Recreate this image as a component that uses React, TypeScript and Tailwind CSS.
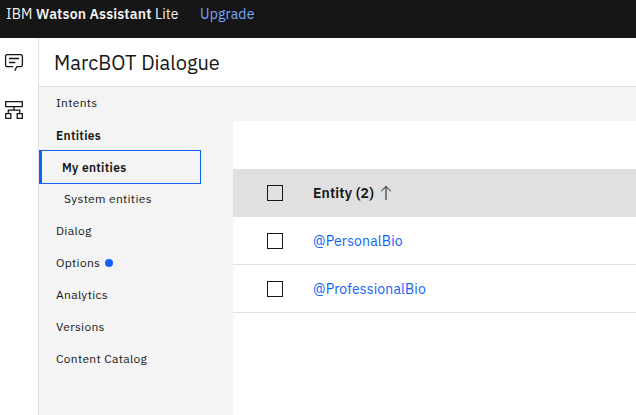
import React from "react";

function Checkbox() {
  return <span className="block h-4 w-4 shrink-0 border border-[#161616]" />;
}

function NavItem({ children, className = "" }: { children: React.ReactNode; className?: string }) {
  return <li className={`flex h-8 items-center pl-[17px] ${className}`}>{children}</li>;
}

export default function App() {
  return (
    <div className="flex h-[415px] w-[636px] flex-col overflow-hidden bg-white font-['IBM_Plex_Sans',Roboto,sans-serif] text-[#161616]">
      <header className="flex h-[38px] shrink-0 items-start whitespace-nowrap bg-[#161616] pl-1.5 pt-1 text-sm leading-5 tracking-[0.16px] text-[#f4f4f4]">
        <span className="w-[194px]">
          IBM <b className="font-semibold">Watson Assistant</b> Lite
        </span>
        <a className="text-[#78a9ff]">Upgrade</a>
      </header>
      <div className="flex min-h-0 flex-1">
        <aside className="flex w-[39px] shrink-0 flex-col gap-7 border-r border-[#e0e0e0] pl-1 pt-[14px]">
          <svg width="20" height="20" viewBox="0 0 20 20" fill="none" stroke="#161616" strokeWidth="1.3">
            <path d="M9.2 14.6H3.2Q1.6 14.6 1.6 13V4.2Q1.6 2.6 3.2 2.6H16.8Q18.4 2.6 18.4 4.2V13Q18.4 14.6 16.8 14.6H13L10.6 18.6" />
            <path d="M5 6.5H15M5 10.5H11.3" />
          </svg>
          <svg width="20" height="20" viewBox="0 0 20 20" fill="none" stroke="#161616" strokeWidth="1.3">
            <path d="M1.7 1.7H18.3V6.6H1.7ZM1.7 13.7H6.8V18.3H1.7ZM13.2 13.7H18.3V18.3H13.2ZM10 6.6V10.2M4.3 13.7V10.2H15.7V13.7" />
          </svg>
        </aside>
        <main className="flex min-w-0 flex-1 flex-col">
          <div className="flex h-[49px] shrink-0 items-center border-b border-[#e0e0e0] pl-[15px] pt-0.5">
            <h1 className="text-xl leading-6">MarcBOT Dialogue</h1>
          </div>
          <div className="flex min-h-0 flex-1 bg-[#f4f4f4]">
            <nav className="w-[194px] shrink-0">
              <ul className="text-xs tracking-[0.32px]">
                <NavItem>Intents</NavItem>
                <NavItem className="pt-px font-semibold">Entities</NavItem>
                <li className="-my-px flex h-[34px] w-[162px] items-center border border-l-[3px] border-[#0f62fe] pl-5 pt-px font-semibold">
                  My entities
                </li>
                <li className="flex h-8 items-center pl-[25px]">System entities</li>
                <NavItem>Dialog</NavItem>
                <NavItem>
                  Options
                  <span className="ml-[5px] h-2 w-2 rounded-full bg-[#0f62fe]" />
                </NavItem>
                <NavItem>Analytics</NavItem>
                <NavItem>Versions</NavItem>
                <NavItem>Content Catalog</NavItem>
              </ul>
            </nav>
            <section className="mt-[34px] flex-1 bg-white pt-12 text-sm tracking-[0.16px]">
              <div className="flex h-12 items-center bg-[#e0e0e0] pl-[34px]">
                <Checkbox />
                <span className="ml-[30px] font-semibold">Entity (2)</span>
                <svg className="ml-1.5" width="12" height="16" viewBox="0 0 12 16" fill="none" stroke="#161616">
                  <path d="M6 15V1.5M1.2 6.2L6 1.5L10.8 6.2" />
                </svg>
              </div>
              <div className="flex h-12 items-center border-b border-[#e0e0e0] pl-[34px]">
                <Checkbox />
                <a className="ml-[30px] text-[#0f62fe]">@PersonalBio</a>
              </div>
              <div className="flex h-12 items-center border-b border-[#e0e0e0] pl-[34px]">
                <Checkbox />
                <a className="ml-[30px] text-[#0f62fe]">@ProfessionalBio</a>
              </div>
            </section>
          </div>
        </main>
      </div>
    </div>
  );
}
